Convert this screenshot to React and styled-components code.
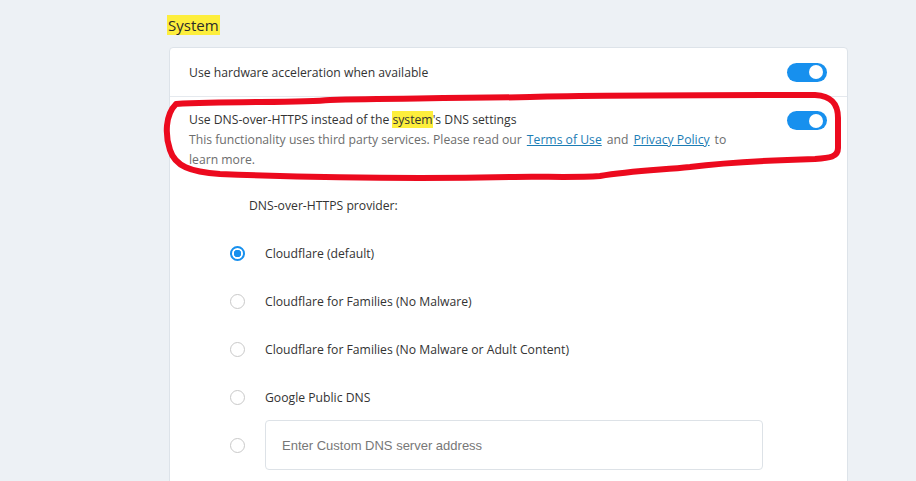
import React from "react";
import styled, { createGlobalStyle } from "styled-components";

const Global = createGlobalStyle`
  html, body {
    margin: 0;
    padding: 0;
    overflow: hidden;
    background: #edf1f5;
  }
  body {
    font-family: "Open Sans", "Noto Sans", sans-serif;
    color: #333;
  }
`;

const Page = styled.div`
  position: relative;
  width: 916px;
  height: 481px;
  overflow: hidden;
`;

const Column = styled.div`
  display: flex;
  flex-direction: column;
  align-items: flex-start;
  padding: 15px 0 0 167px;
`;

const Heading = styled.h2`
  margin: 0 0 12px;
  font-size: 15px;
  font-weight: 400;
  line-height: 20px;
  color: #2b2b2b;
  background: #fdee3c;
  padding: 0 1px;
`;

const Card = styled.section`
  box-sizing: border-box;
  width: 679px;
  margin-left: 2px;
  background: #fff;
  border: 1px solid #dde3e9;
  border-radius: 4px;
  padding-bottom: 40px;
`;

const Row = styled.div`
  box-sizing: border-box;
  display: flex;
  justify-content: space-between;
  align-items: ${(p) => (p.$top ? "flex-start" : "center")};
  min-height: ${(p) => (p.$top ? "auto" : "49px")};
  padding: ${(p) => (p.$top ? "13px 20px 0 19px" : "2px 20px 0 19px")};
  border-bottom: ${(p) => (p.$divider ? "1px solid #e5e9ee" : "none")};
  font-size: 12.2px;
  line-height: 20px;
`;

const TextBlock = styled.div`
  max-width: 560px;
`;

const Sub = styled.div`
  color: #6d6d6d;
`;

const Mark = styled.span`
  background: #fdee3c;
`;

const Link = styled.a`
  color: #1c7db5;
  text-decoration: underline;
  margin: 0 5px;
  cursor: pointer;
`;

const Toggle = styled.span`
  position: relative;
  flex: none;
  width: 40px;
  height: 19px;
  border-radius: 10px;
  background: #1790ee;
  margin-top: ${(p) => p.$offset || 0}px;

  &::after {
    content: "";
    position: absolute;
    right: 4px;
    top: 2.5px;
    width: 14px;
    height: 14px;
    border-radius: 50%;
    background: #fff;
  }
`;

const Provider = styled.div`
  padding: 26px 0 0 79px;
  font-size: 12.2px;
  line-height: 20px;
  color: #333;
`;

const Options = styled.div`
  display: flex;
  flex-direction: column;
  padding: 13px 0 0 60px;
`;

const Option = styled.label`
  display: flex;
  align-items: center;
  height: 48px;
  gap: 20px;
  font-size: 12.2px;
  color: #333;
`;

const Radio = styled.span`
  box-sizing: border-box;
  flex: none;
  width: 15px;
  height: 15px;
  border-radius: 50%;
  border: ${(p) => (p.$on ? "2px solid #1790ee" : "1.5px solid #c9c9c9")};
  background: ${(p) =>
    p.$on ? "radial-gradient(circle, #1790ee 0 3.5px, #fff 4px)" : "#fff"};
`;

const AddressInput = styled.input`
  box-sizing: border-box;
  width: 498px;
  height: 50px;
  border: 1px solid #dde2e7;
  border-radius: 4px;
  padding: 0 16px;
  font-family: "Liberation Sans", Arial, sans-serif;
  font-size: 13px;
  color: #333;
  outline: none;

  &::placeholder {
    color: #777;
  }
`;

const Scribble = styled.svg`
  position: absolute;
  left: 0;
  top: 0;
  pointer-events: none;
`;

const providers = [
  { label: "Cloudflare (default)", on: true },
  { label: "Cloudflare for Families (No Malware)" },
  { label: "Cloudflare for Families (No Malware or Adult Content)" },
  { label: "Google Public DNS" },
];

export default function App() {
  return (
    <Page>
      <Global />
      <Column>
        <Heading>System</Heading>
        <Card>
          <Row $divider>
            <span>Use hardware acceleration when available</span>
            <Toggle $offset={-2} />
          </Row>
          <Row $top>
            <TextBlock>
              <div>
                Use DNS-over-HTTPS instead of the <Mark>system</Mark>'s DNS
                settings
              </div>
              <Sub>
                This functionality uses third party services. Please read our
                <Link>Terms of Use</Link>and<Link>Privacy Policy</Link>to learn
                more.
              </Sub>
            </TextBlock>
            <Toggle $offset={1} />
          </Row>
          <Provider>DNS-over-HTTPS provider:</Provider>
          <Options>
            {providers.map((p) => (
              <Option key={p.label}>
                <Radio $on={p.on} />
                {p.label}
              </Option>
            ))}
            <Option>
              <Radio />
              <AddressInput placeholder="Enter Custom DNS server address" />
            </Option>
          </Options>
        </Card>
      </Column>
      <Scribble width="916" height="481" viewBox="0 0 916 481">
        <path
          d="M176 104 C230 101 300 103 330 100 C380 98 430 99 530 97 C600 95 700 95 815 95 C832 96 838 104 838 118 L838 148 C838 157 830 158 815 159 C780 160 730 162 690 167 C660 170 630 171 600 176 C570 178 540 176 510 177 C420 179 300 177 220 174 C190 172 175 166 170 150 C165 135 165 115 176 104 Z"
          fill="none"
          stroke="#ec0a1e"
          strokeWidth="6"
          strokeLinejoin="round"
        />
      </Scribble>
    </Page>
  );
}
